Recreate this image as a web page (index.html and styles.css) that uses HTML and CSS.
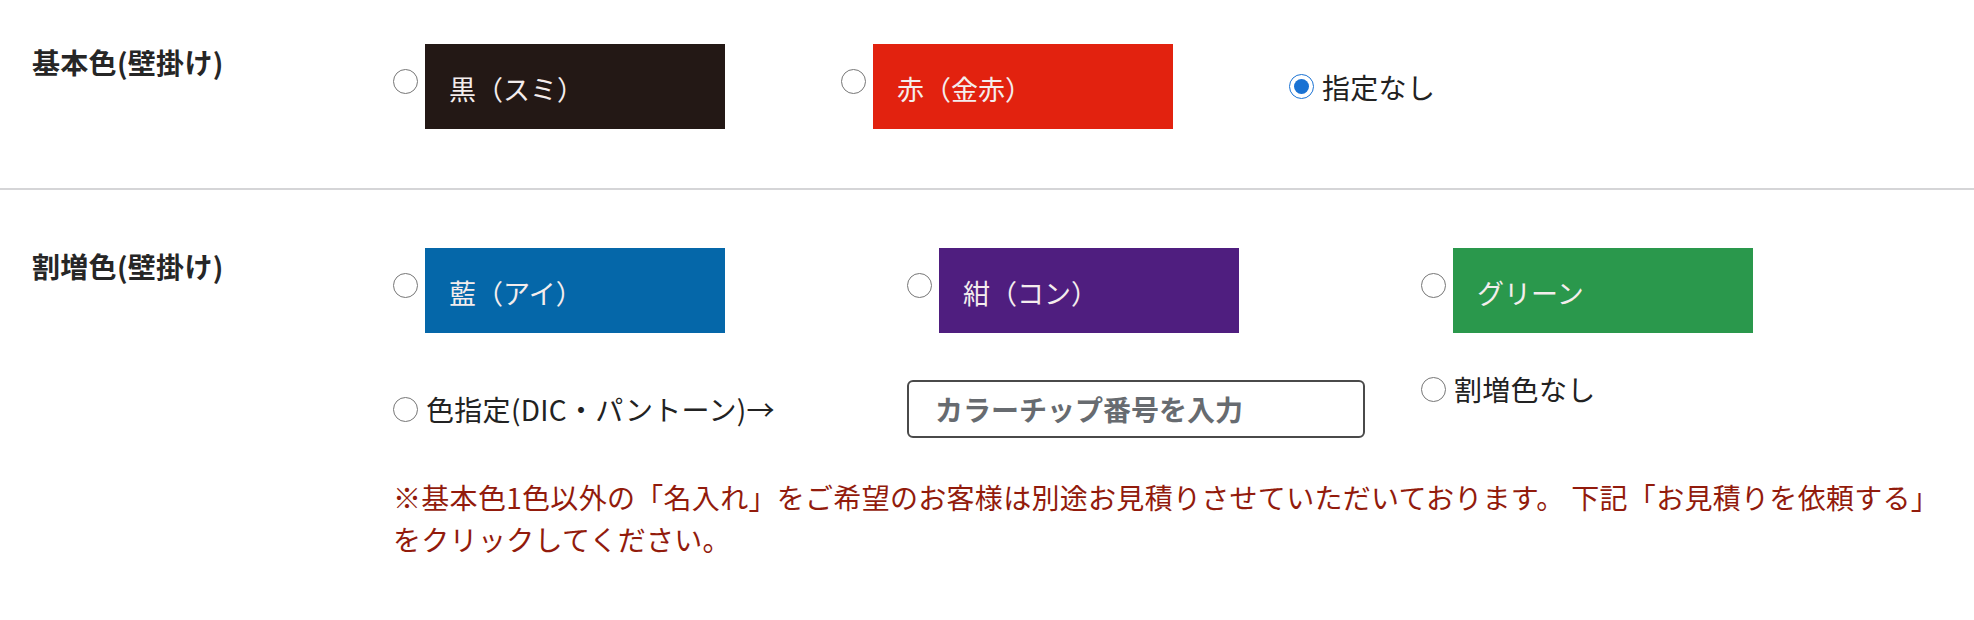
FILE: index.html
```html
<!DOCTYPE html>
<html lang="ja">
<head>
    <meta charset="UTF-8">
    <meta name="viewport" content="width=device-width, initial-scale=1.0">
    <title>名入れ色の選択</title>
    <link rel="stylesheet" href="styles.css">
</head>
<body>
    <div class="row row-base">
        <div class="row-label">基本色(壁掛け)</div>
        <div class="options-inline">
            <label class="option">
                <input type="radio" name="base_color" value="black">
                <span class="swatch swatch-black">黒（スミ）</span>
            </label>
            <label class="option">
                <input type="radio" name="base_color" value="red">
                <span class="swatch swatch-red">赤（金赤）</span>
            </label>
            <label class="option option-text">
                <input type="radio" name="base_color" value="none" checked>
                <span>指定なし</span>
            </label>
        </div>
    </div>

    <div class="row row-extra">
        <div class="row-label">割増色(壁掛け)</div>
        <div class="row-body">
            <div class="options-grid">
                <label class="option">
                    <input type="radio" name="extra_color" value="ai">
                    <span class="swatch swatch-blue">藍（アイ）</span>
                </label>
                <label class="option">
                    <input type="radio" name="extra_color" value="kon">
                    <span class="swatch swatch-purple">紺（コン）</span>
                </label>
                <label class="option">
                    <input type="radio" name="extra_color" value="green">
                    <span class="swatch swatch-green">グリーン</span>
                </label>

                <label class="option option-text option-dic">
                    <input type="radio" name="extra_color" value="dic">
                    <span>色指定(DIC・パントーン)→</span>
                </label>
                <input type="text" class="chip-input" placeholder="カラーチップ番号を入力">
                <label class="option option-text option-none">
                    <input type="radio" name="extra_color" value="none">
                    <span>割増色なし</span>
                </label>
            </div>
            <p class="note">※基本色1色以外の「名入れ」をご希望のお客様は別途お見積りさせていただいております。 下記「お見積りを依頼する」をクリックしてください。</p>
        </div>
    </div>
</body>
</html>
```

FILE: styles.css
```css
body {
    margin: 0;
    font-family: "Noto Sans CJK JP", "Noto Sans", sans-serif;
    font-size: 28px;
    color: #222;
    background-color: #fff;
}

.row {
    display: grid;
    grid-template-columns: 393px 1fr;
}

.row-base {
    padding-top: 44px;
    padding-bottom: 59px;
    border-bottom: 2px solid #d5d5d7;
}

.row-extra {
    padding-top: 58px;
    padding-right: 30px;
}

.row-label {
    padding-left: 32px;
    font-weight: bold;
    line-height: 36px;
    color: #262626;
    letter-spacing: 0.3px;
}

.options-inline {
    display: flex;
    align-items: center;
    gap: 116px;
}

.option {
    display: flex;
    align-items: center;
    gap: 7px;
    cursor: pointer;
}

.option input[type="radio"] {
    width: 25px;
    height: 25px;
    margin: 0 0 10px 0;
    accent-color: #1a72d3;
}

.option-text {
    gap: 8px;
    line-height: 42px;
    letter-spacing: 0.3px;
}

.option-text input[type="radio"] {
    margin: 0;
}

.swatch {
    display: block;
    box-sizing: border-box;
    width: 300px;
    height: 85px;
    padding: 4px 0 0 24px;
    line-height: 81px;
    font-size: 27px;
    color: #f4eded;
}

.swatch-black {
    background-color: #231815;
}

.swatch-red {
    background-color: #e2220f;
}

.swatch-blue {
    background-color: #0567a9;
}

.swatch-purple {
    background-color: #4f1e7f;
}

.swatch-green {
    background-color: #2a984c;
}

.options-grid {
    display: grid;
    grid-template-columns: repeat(3, 514px);
    row-gap: 43px;
    align-items: start;
}

.option-dic {
    margin-top: 4px;
    height: 58px;
}

.option-none {
    margin-top: -8px;
}

.chip-input {
    box-sizing: border-box;
    width: 458px;
    height: 58px;
    margin-top: 4px;
    padding: 0 26px;
    border: 2px solid #4a4a4a;
    border-radius: 6px;
    font-family: inherit;
    font-size: 28px;
    font-weight: bold;
}

.chip-input::placeholder {
    color: #676b70;
}

.note {
    margin: 38px 0 0;
    line-height: 42px;
    color: #921b0c;
    letter-spacing: 0.3px;
}
```
